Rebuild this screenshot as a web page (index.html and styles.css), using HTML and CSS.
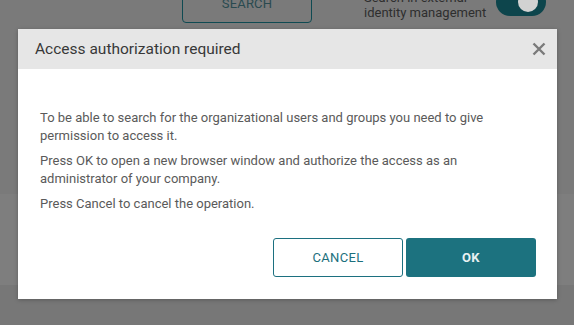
FILE: index.html
```html
<!DOCTYPE html>
<html>
<head>
<meta charset="utf-8">
<link rel="stylesheet" href="styles.css">
</head>
<body>
<div class="page">
  <div class="top">
    <div class="toolbar">
      <div class="search-btn">SEARCH</div>
      <div class="toggle-label">Search in external<br>identity management</div>
      <div class="toggle"><span class="knob"></span></div>
    </div>
  </div>
  <div class="band"></div>
  <div class="bottom"></div>
</div>
<div class="modal">
  <div class="modal-header">
    <div class="modal-title">Access authorization required</div>
    <svg class="close" width="14" height="14" viewBox="0 0 14 14"><path d="M1.5 1.5 L12.5 12.5 M12.5 1.5 L1.5 12.5" stroke="#7a7a7a" stroke-width="2.4" fill="none"/></svg>
  </div>
  <div class="modal-body">
    <p>To be able to search for the organizational users and groups you need to give permission to access it.</p>
    <p>Press OK to open a new browser window and authorize the access as an administrator of your company.</p>
    <p>Press Cancel to cancel the operation.</p>
  </div>
  <div class="modal-footer">
    <div class="btn btn-cancel">CANCEL</div>
    <div class="btn btn-ok">OK</div>
  </div>
</div>
</body>
</html>
```
FILE: styles.css
```css
html, body {
  margin: 0;
  padding: 0;
}
body {
  width: 574px;
  height: 325px;
  overflow: hidden;
  font-family: Roboto, "Liberation Sans", sans-serif;
  background: #787878;
  position: relative;
}
.page {
  display: flex;
  flex-direction: column;
  height: 325px;
}
.top {
  height: 194px;
  background: #7a7a7a;
  overflow: hidden;
}
.toolbar {
  display: flex;
  align-items: flex-end;
  height: 23px;
  padding-left: 182px;
}
.search-btn {
  flex: none;
  width: 130px;
  height: 38px;
  box-sizing: border-box;
  border: 1px solid #0f4a52;
  border-radius: 4px;
  display: flex;
  align-items: center;
  justify-content: center;
  color: #2a4a50;
  font-size: 13px;
  letter-spacing: 0.2px;
  padding-bottom: 2px;
}
.toggle-label {
  flex: none;
  margin-left: 52px;
  margin-bottom: 3px;
  font-size: 13px;
  line-height: 15px;
  color: #2e2e2e;
}
.toggle {
  flex: none;
  margin-left: 10px;
  margin-bottom: 7px;
  width: 50px;
  height: 28px;
  border-radius: 14px;
  background: #0d454c;
  display: flex;
  align-items: center;
  justify-content: flex-end;
  padding-right: 8px;
  box-sizing: border-box;
}
.knob {
  width: 20px;
  height: 20px;
  border-radius: 50%;
  background: #d2d2d2;
}
.band {
  height: 91px;
  background: #7e7e7e;
}
.bottom {
  flex: 1;
  background: #777777;
}
.modal {
  position: absolute;
  left: 18px;
  top: 29px;
  width: 539px;
  height: 270px;
  background: #ffffff;
  box-shadow: 0 1px 4px rgba(0,0,0,0.25);
  display: flex;
  flex-direction: column;
}
.modal-header {
  flex: none;
  height: 40px;
  background: #e6e6e6;
  display: flex;
  align-items: center;
  justify-content: space-between;
  padding: 0 11px 0 17px;
}
.modal-title {
  font-size: 15.5px;
  color: #383838;
}
.close {
  display: block;
}
.modal-body {
  padding: 40px 22px 0 22px;
  font-size: 13px;
  line-height: 18px;
  color: #5a5a5a;
}
.modal-body p {
  margin: 0 0 7px 0;
}
.modal-footer {
  margin-top: auto;
  display: flex;
  justify-content: flex-end;
  gap: 3px;
  padding: 0 21px 22px 0;
}
.btn {
  width: 130px;
  height: 39px;
  box-sizing: border-box;
  border-radius: 3px;
  display: flex;
  align-items: center;
  justify-content: center;
  font-size: 13px;
  letter-spacing: 0.3px;
}
.btn-cancel {
  border: 1px solid #1c7080;
  color: #1c6f7d;
  background: #fff;
}
.btn-ok {
  background: #1c727f;
  color: #e8f1f2;
  font-weight: bold;
}
```
